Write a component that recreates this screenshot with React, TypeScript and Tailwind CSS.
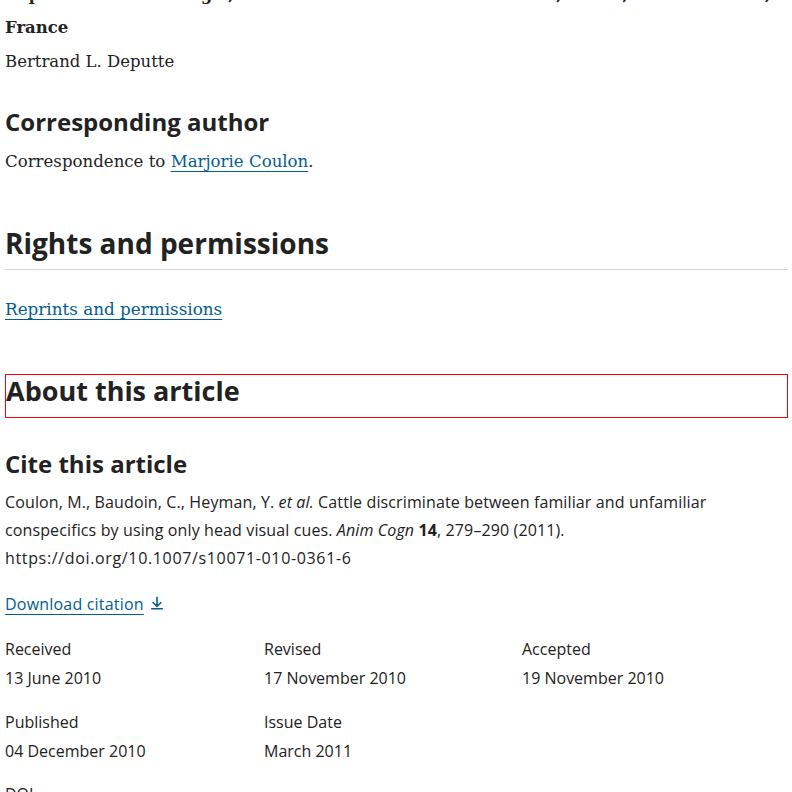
import React from "react";

const serif = { fontFamily: '"DejaVu Serif", "Liberation Serif", serif' };
const sans = { fontFamily: '"Open Sans", "Noto Sans", sans-serif' };

function Item({ label, value }: { label: string; value: string }) {
  return (
    <div className="flex flex-col">
      <span className="text-[16px] leading-[29px]">{label}</span>
      <span className="text-[16px] leading-[29px]">{value}</span>
    </div>
  );
}

export default function App() {
  return (
    <div className="w-[792px] h-[792px] overflow-hidden bg-white text-[#222222]">
      <div className="pl-[5px] pr-[4px] mt-[-13px]">
        <div style={serif} className="text-[17px]">
          <p className="font-bold whitespace-nowrap leading-[16px] text-[16px] tracking-[-0.1px]">
            Département d'Ethologie, Ecole Nationale Vétérinaire d'Alfort, 94704, Maisons-Alfort,
          </p>
          <p className="mt-[8px] font-bold leading-[34px] text-[16.5px]">France</p>
          <p className="leading-[34px] text-[16.5px]">Bertrand L. Deputte</p>
        </div>

        <h3 style={sans} className="mt-[27px] text-[24px] leading-[32px] font-bold">
          Corresponding author
        </h3>
        <p style={serif} className="mt-[10px] text-[16.6px] leading-[28px]">
          Correspondence to{" "}
          <a className="text-[#025e8d] underline underline-offset-[4px] decoration-1">Marjorie Coulon</a>.
        </p>

        <h2 style={sans} className="mt-[47px] text-[28px] leading-[40px] font-bold pb-[6px] border-b border-[#d5d5d5]">
          Rights and permissions
        </h2>
        <p style={serif} className="mt-[25px] text-[16.8px] leading-[28px]">
          <a className="text-[#025e8d] underline underline-offset-[4px] decoration-1">Reprints and permissions</a>
        </p>

        <div className="mt-[51px] border border-[#ff0000] h-[44px] flex items-start">
          <h2 style={sans} className="text-[27px] leading-[30px] font-bold mt-[1px]">
            About this article
          </h2>
        </div>

        <h3 style={sans} className="mt-[30px] text-[24px] leading-[32px] font-bold">
          Cite this article
        </h3>
        <p style={sans} className="mt-[8px] text-[16px] leading-[28px] tracking-[0.12px]">
          Coulon, M., Baudoin, C., Heyman, Y. <i>et al.</i> Cattle discriminate between familiar and unfamiliar
          conspecifics by using only head visual cues. <i>Anim Cogn</i> <b>14</b>, 279–290 (2011).{" "}
          <span className="tracking-[0.65px]">https://doi.org/10.1007/s10071-010-0361-6</span>
        </p>
        <p style={sans} className="mt-[18px] text-[16px] leading-[28px] flex items-center">
          <a className="text-[#025e8d] underline underline-offset-[4px] decoration-1 tracking-[0.2px]">Download citation</a>
          <svg className="ml-[6px] mb-[2px]" width="14" height="14" viewBox="0 0 16 16" fill="none" stroke="#025e8d" strokeWidth="1.8" strokeLinecap="round" strokeLinejoin="round">
            <path d="M8 1.5v10M3.5 7.5 8 12l4.5-4.5M2 14.5h12" />
          </svg>
        </p>

        <div style={sans} className="mt-[17px] grid grid-cols-[259px_258px_1fr] gap-y-[15px]">
          <Item label="Received" value="13 June 2010" />
          <Item label="Revised" value="17 November 2010" />
          <Item label="Accepted" value="19 November 2010" />
          <Item label="Published" value="04 December 2010" />
          <Item label="Issue Date" value="March 2011" />
        </div>
        <p style={sans} className="mt-[14px] text-[16px] leading-[29px]">DOI</p>
      </div>
    </div>
  );
}
